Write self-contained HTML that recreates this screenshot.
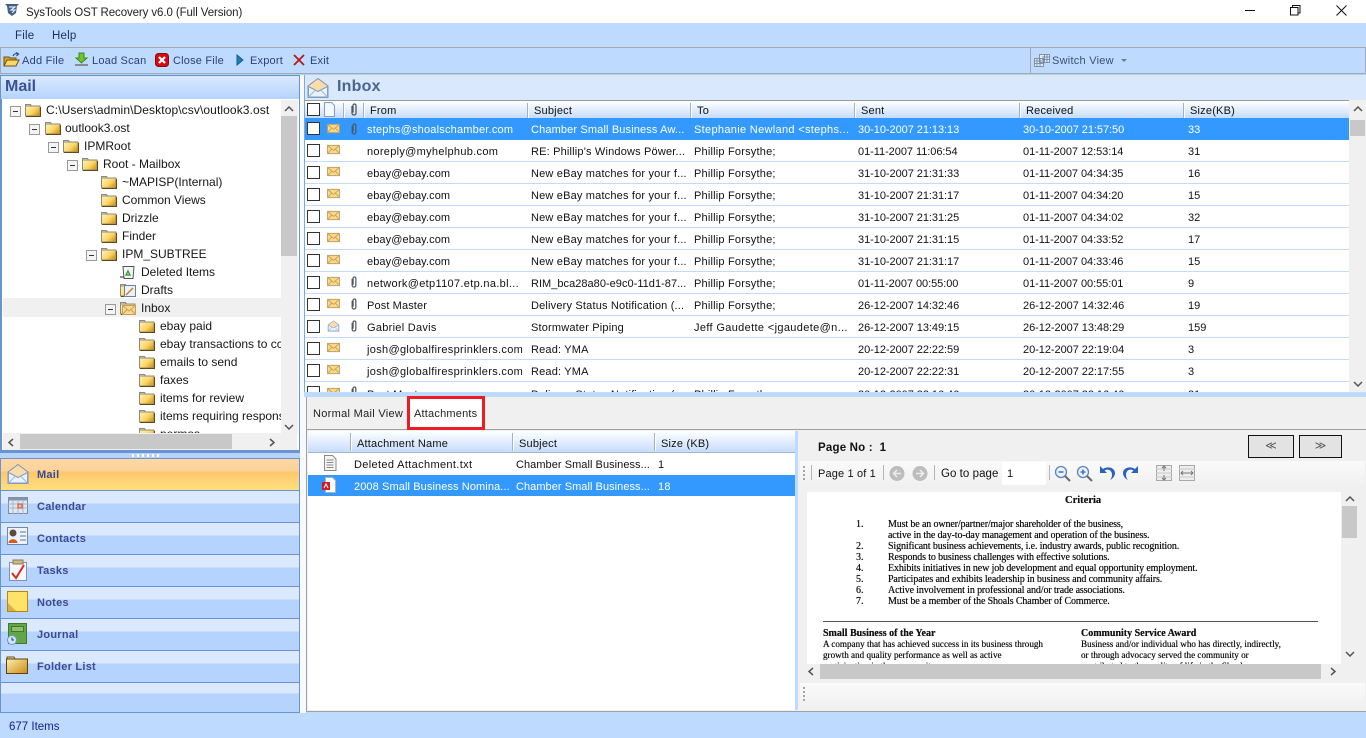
<!DOCTYPE html>
<html><head><meta charset="utf-8"><title>SysTools OST Recovery</title>
<style>
html,body{margin:0;padding:0;width:1366px;height:738px;overflow:hidden;background:#bfdaff}
body{position:relative;font:11px/16px "Liberation Sans",sans-serif;color:#111}
div,span,svg{position:absolute}
.t{white-space:nowrap;letter-spacing:.2px;margin-top:1px}
.att{letter-spacing:.05px}
.w{color:#fff}
.r{left:305px;width:1044px;height:21px;background:#fff;border-bottom:1px solid #c2dbfb}
.r span{white-space:nowrap;top:4px}
.r .a{left:62px;letter-spacing:.2px}.r .b{left:226px;letter-spacing:.18px}.r .c{left:389px;letter-spacing:.2px}.r .d{left:553px;letter-spacing:-.05px}.r .e{left:718px;letter-spacing:-.05px}.r .f{left:883px}
.cb{left:2px;top:4px;width:11px;height:11px;border:1px solid #333;background:#fff}
.sel{background:#3399ff;color:#fff;border-bottom-color:#3399ff}
.h{background:linear-gradient(#fff,#c6dcfb)}
.sep{top:2px;width:1px;height:15px;background:#9fb2c9;border-right:1px solid #fff}
.nav{left:1px;width:298px;height:31px;background:linear-gradient(#dbe9ff 0,#dbe9ff 40%,#b5d3fd 40%,#b5d3fd 100%);border-bottom:1px solid #6a94d1}
.nav b{position:absolute;left:36px;top:8px;font-size:11px;color:#3a4a94;letter-spacing:.25px}
.nav svg{left:6px;top:4px}
.tree{white-space:nowrap;font-size:12px;height:18px;line-height:18px;color:#161616}
.x{width:9px;height:9px;border:1px solid #999;background:#f4f4f4}
.x:after{content:"";position:absolute;left:2px;top:4px;width:5px;height:1px;background:#333}
.doc{font:10px/11px "Liberation Serif",serif;color:#111;white-space:nowrap;text-shadow:0 0 .4px #000}
.doc .l{letter-spacing:-.13px}
.doc .s{font-size:9.1px}
.tb{color:#2a3f7a;white-space:nowrap;letter-spacing:.2px;margin-top:1px}
</style></head><body>
<svg width="0" height="0" style="left:0;top:0">
<defs>
<linearGradient id="fg" x1="0" y1="0" x2="1" y2=".7"><stop offset="0" stop-color="#fff3c0"/><stop offset=".6" stop-color="#fcd667"/><stop offset="1" stop-color="#d79a1e"/></linearGradient>
<symbol id="fold" viewBox="0 0 16 14"><path d="M.5 3V1.500h5l1 1.500z" fill="#e8e4d2" stroke="#8f8a76"/><path d="M.5 3h14.500v10H.5z" fill="url(#fg)" stroke="#8f8a76"/><path d="M1 13.500h14.500V4" fill="none" stroke="#5d4a1a"/></symbol>
<symbol id="env" viewBox="0 0 14 12"><path d="M.5 1.500h13v9H.5z" fill="#fcd88a" stroke="#b9a26a"/><path d="M.5 1.500L7 7l6.500-5.500M.5 10.500L5 5.500M13.500 10.500L9 5.500" fill="none" stroke="#c9a05a"/></symbol>
<symbol id="clip" viewBox="0 0 8 13"><path d="M2 3v7a2 2 0 0 0 4 0V2.500a1.500 1.500 0 0 0-3 0V9.500" fill="none" stroke="#4d565f" stroke-width="1.300"/></symbol>
<symbol id="big" viewBox="0 0 22 22"><path d="M1 9L11 1.500 21 9v11.500H1z" fill="#fcdca8" stroke="#7f93b5"/><path d="M1.500 9.500l9.500 5 9.500-5v10.500h-19z" fill="#eaf2fd" stroke="#7f9fca"/><path d="M1.500 20l7-7M20.500 20l-7-7" stroke="#9db9dd" fill="none"/></symbol>
</defs></svg>

<!-- title bar -->
<div style="left:0;top:0;width:1366px;height:23px;background:#fff"></div>
<svg style="left:4px;top:3px" width="16" height="14" viewBox="0 0 16 14"><path d="M1 1h14l-2 2-1 7-4 3-4-3-1-7z" fill="#3f5f86"/><path d="M5 4h6L7 7h4L8 10" fill="none" stroke="#dfe8f2" stroke-width="1.200"/></svg>
<div class="t" style="left:26px;top:4px;color:#222;font-size:11.5px;letter-spacing:-.1px">SysTools OST Recovery v6.0 (Full Version)</div>
<div style="left:1245px;top:10px;width:10px;height:1px;background:#111"></div>
<svg style="left:1290px;top:5px" width="11" height="11"><path d="M.5 2.500h7.500v7.500H.5zM2.500 2.500V.5h7.500v7.500H8" fill="none" stroke="#111"/></svg>
<svg style="left:1336px;top:5px" width="11" height="11"><path d="M.5.5l10 10M10.500.5l-10 10" stroke="#111" fill="none"/></svg>

<!-- menu -->
<div class="t" style="left:15px;top:27px;color:#1e2f60;font-size:11.5px">File</div>
<div class="t" style="left:52px;top:27px;color:#1e2f60;font-size:11.5px">Help</div>

<!-- toolbar -->
<div style="left:0;top:47px;width:1366px;height:1px;background:#a5a9ad"></div>
<div style="left:0;top:73px;width:1366px;height:1px;background:#a5a9ad"></div>
<div style="left:0;top:74px;width:1366px;height:1px;background:#a9d3ee"></div>
<div style="left:1030px;top:47px;width:1px;height:27px;background:#a5a9ad"></div>
<div style="left:1365px;top:47px;width:1px;height:27px;background:#a5a9ad"></div>
<div style="left:0;top:47px;width:1px;height:27px;background:#a5a9ad"></div>
<svg style="left:3px;top:52px" width="17" height="15" viewBox="0 0 17 15"><path d="M1 5h5l1 1h6v2H5L2 14H1z" fill="#d9a52f" stroke="#6d5312"/><path d="M4 8h12l-3 6H1z" fill="#fcd768" stroke="#6d5312"/><path d="M10 4c1-2 3-3 5-2M13 .5L15.500 2 13.500 4" fill="none" stroke="#224a9c" stroke-width="1.200"/></svg>
<div class="tb" style="left:22px;top:52px;letter-spacing:.25px">Add File</div>
<svg style="left:74px;top:52px" width="15" height="15" viewBox="0 0 15 15"><path d="M5 1h5v5h3L7.500 11 2 6h3z" fill="#6bc52b" stroke="#3f8a12"/><path d="M1 13h13" stroke="#8a8a8a" stroke-width="2"/></svg>
<div class="tb" style="left:92px;top:52px">Load Scan</div>
<svg style="left:155px;top:53px" width="14" height="14" viewBox="0 0 14 14"><rect x=".5" y=".5" width="13" height="13" rx="3" fill="#d40d12" stroke="#8a0a0a"/><path d="M4 4l6 6M10 4l-6 6" stroke="#fff" stroke-width="2.200"/></svg>
<div class="tb" style="left:173px;top:52px">Close File</div>
<svg style="left:236px;top:54px" width="8" height="12" viewBox="0 0 8 12"><path d="M1 1l6 5-6 5z" fill="#1f7fb8" stroke="#12608f"/></svg>
<div class="tb" style="left:250px;top:52px">Export</div>
<svg style="left:293px;top:54px" width="12" height="12" viewBox="0 0 12 12"><path d="M1 1l10 10M11 1L1 11" stroke="#b21a16" stroke-width="1.800"/></svg>
<div class="tb" style="left:310px;top:52px">Exit</div>
<svg style="left:1034px;top:54px" width="16" height="13" viewBox="0 0 16 13"><path d="M5.500.5h10v8h-10zM.5 4.500h9v8h-9zM.5 7h9M.5 9.500h9M3 4.500v8M6 4.500v8M8 3h7.500M8 5.500h7.500M10.500.5v8M13 .5v8" fill="#e3edf8" stroke="#6a7c95" stroke-width=".8"/></svg>
<div class="tb" style="left:1052px;top:52px;color:#3a5070;letter-spacing:.25px">Switch View</div>
<div style="left:1121px;top:59px;width:0;height:0;border:3px solid transparent;border-top:3px solid #6a7c95"></div>

<!-- white gutter -->
<div style="left:300px;top:75px;width:4px;height:638px;background:#f6f9fe"></div>
<div style="left:304px;top:392px;width:2px;height:321px;background:#f6f9fe"></div>

<!-- left pane -->
<div style="left:0;top:75px;width:300px;height:25px;border:1px solid #6a94d1;box-sizing:border-box;background:linear-gradient(#dbe9ff,#b5d3fd)"></div>
<div style="left:5px;top:78px;font-size:16px;line-height:18px;font-weight:bold;color:#3a5396">Mail</div>
<div style="left:0;top:99px;width:300px;height:353px;box-sizing:border-box;border:2px solid #6a94d1;border-top:0;border-right:1px solid #6a94d1;background:#fff"></div>
<div style="left:3px;top:298px;width:278px;height:19px;background:#f0f0f0"></div>

<div class="x" style="left:10px;top:106px"></div>
<svg style="left:25px;top:103px" width="16" height="14"><use href="#fold"/></svg>
<div class="tree" style="left:46px;top:101px;letter-spacing:.1px">C:\Users\admin\Desktop\csv\outlook3.ost</div>
<div class="x" style="left:29px;top:124px"></div>
<svg style="left:45px;top:121px" width="16" height="14"><use href="#fold"/></svg>
<div class="tree" style="left:65px;top:119px">outlook3.ost</div>
<div class="x" style="left:48px;top:142px"></div>
<svg style="left:63px;top:139px" width="16" height="14"><use href="#fold"/></svg>
<div class="tree" style="left:84px;top:137px">IPMRoot</div>
<div class="x" style="left:67px;top:160px"></div>
<svg style="left:82px;top:157px" width="16" height="14"><use href="#fold"/></svg>
<div class="tree" style="left:103px;top:155px">Root - Mailbox</div>
<svg style="left:101px;top:175px" width="16" height="14"><use href="#fold"/></svg>
<div class="tree" style="left:122px;top:173px">~MAPISP(Internal)</div>
<svg style="left:101px;top:193px" width="16" height="14"><use href="#fold"/></svg>
<div class="tree" style="left:122px;top:191px">Common Views</div>
<svg style="left:101px;top:211px" width="16" height="14"><use href="#fold"/></svg>
<div class="tree" style="left:122px;top:209px">Drizzle</div>
<svg style="left:101px;top:229px" width="16" height="14"><use href="#fold"/></svg>
<div class="tree" style="left:122px;top:227px">Finder</div>
<div class="x" style="left:86px;top:250px"></div>
<svg style="left:101px;top:247px" width="16" height="14"><use href="#fold"/></svg>
<div class="tree" style="left:122px;top:245px">IPM_SUBTREE</div>
<svg style="left:120px;top:265px" width="16" height="14" viewBox="0 0 16 14"><path d="M3 1.500h11l-1 12H4z" fill="#f3f3f3" stroke="#555"/><path d="M6 10l2-4 2 4z" fill="none" stroke="#2a8a2a" stroke-width="1.200"/><path d="M0 12h4" stroke="#222"/></svg>
<div class="tree" style="left:141px;top:263px">Deleted Items</div>
<svg style="left:120px;top:283px" width="16" height="14"><use href="#fold"/></svg>
<svg style="left:124px;top:285px" width="12" height="12" viewBox="0 0 12 12"><rect x=".5" y=".5" width="11" height="11" fill="#eaf2fd" stroke="#6a80a5"/><path d="M2 10l7-7" stroke="#d07a20" stroke-width="1.500"/></svg>
<div class="tree" style="left:141px;top:281px">Drafts</div>
<div class="x" style="left:105px;top:304px"></div>
<svg style="left:120px;top:301px" width="16" height="14"><use href="#fold"/></svg>
<svg style="left:122px;top:304px" width="14" height="12"><use href="#env"/></svg>
<div class="tree" style="left:141px;top:299px">Inbox</div>
<svg style="left:139px;top:319px" width="16" height="14"><use href="#fold"/></svg>
<div class="tree" style="left:160px;top:317px">ebay paid</div>
<svg style="left:139px;top:337px" width="16" height="14"><use href="#fold"/></svg>
<div class="tree" style="left:160px;top:335px;width:121px;overflow:hidden">ebay transactions to cc</div>
<svg style="left:139px;top:355px" width="16" height="14"><use href="#fold"/></svg>
<div class="tree" style="left:160px;top:353px">emails to send</div>
<svg style="left:139px;top:373px" width="16" height="14"><use href="#fold"/></svg>
<div class="tree" style="left:160px;top:371px">faxes</div>
<svg style="left:139px;top:391px" width="16" height="14"><use href="#fold"/></svg>
<div class="tree" style="left:160px;top:389px">items for review</div>
<svg style="left:139px;top:409px" width="16" height="14"><use href="#fold"/></svg>
<div class="tree" style="left:160px;top:407px;width:121px;overflow:hidden">items requiring responses</div>
<div style="left:139px;top:427px;width:142px;height:7px;overflow:hidden"><svg style="left:0;top:0" width="16" height="14"><use href="#fold"/></svg><div class="tree" style="left:21px;top:-2px">permos</div></div>

<div style="left:281px;top:100px;width:17px;height:333px;background:#f0f0f0"></div>
<div style="left:281px;top:116px;width:16px;height:140px;background:#c8c8c8"></div>
<svg style="left:284px;top:106px" width="10" height="6"><path d="M1 5l4-4 4 4" fill="none" stroke="#555" stroke-width="1.500"/></svg>
<svg style="left:284px;top:424px" width="10" height="6"><path d="M1 1l4 4 4-4" fill="none" stroke="#555" stroke-width="1.500"/></svg>
<div style="left:3px;top:433px;width:294px;height:17px;background:#f0f0f0"></div>
<div style="left:20px;top:434px;width:212px;height:15px;background:#c8c8c8"></div>
<svg style="left:8px;top:438px" width="6" height="9"><path d="M5 1L1 4.500 5 8" fill="none" stroke="#555" stroke-width="1.500"/></svg>
<svg style="left:269px;top:438px" width="6" height="9"><path d="M1 1l4 3.500L1 8" fill="none" stroke="#555" stroke-width="1.500"/></svg>

<!-- splitter -->
<div style="left:0;top:452px;width:300px;height:7px;background:#b5d3fd;border-top:1px solid #6a94d1;border-bottom:1px solid #6a94d1;box-sizing:border-box"></div>
<div style="left:132px;top:454px;width:28px;height:3px;background:repeating-linear-gradient(90deg,#fff 0,#fff 2px,transparent 2px,transparent 5px)"></div>

<!-- nav -->
<div style="left:0;top:459px;width:1px;height:254px;background:#6a94d1"></div>
<div style="left:299px;top:459px;width:1px;height:254px;background:#6a94d1"></div>
<div class="nav" style="top:459px;background:linear-gradient(#fdd8a4 0,#fcd29b 40%,#fdc66b 40%,#ffdf7f 100%)"><svg width="22" height="22"><use href="#big"/></svg><b>Mail</b></div>
<div class="nav" style="top:491px"><svg width="20" height="18" style="top:6px;left:7px" viewBox="0 0 20 18"><rect x=".5" y=".5" width="19" height="16" fill="#dfe7f3" stroke="#7d8ba0"/><rect x=".5" y=".5" width="19" height="3" fill="#8494ae"/><path d="M0 7h20M0 11h20M5 3v14M10 3v14M15 3v14" stroke="#a9b6c9"/><rect x="10" y="7" width="4" height="4" fill="#f3c4b0" stroke="#d0482a"/></svg><b>Calendar</b></div>
<div class="nav" style="top:523px"><svg width="21" height="18" viewBox="0 0 21 18"><rect x=".5" y=".5" width="20" height="17" fill="#eef3fb" stroke="#6f88b0"/><circle cx="6" cy="6" r="3.500" fill="#5a4a42"/><path d="M1.500 16c0-5 9-5 9 0z" fill="#d9591e"/><path d="M13 5h6M13 9h6M13 13h6" stroke="#8fa0b8" stroke-width="1.500"/></svg><b>Contacts</b></div>
<div class="nav" style="top:555px"><svg width="20" height="22" viewBox="0 0 20 22"><rect x="2.500" y="3.500" width="17" height="18" fill="#f5f8fd" stroke="#7f93b5"/><rect x="6" y="1" width="10" height="4" fill="#c9b88a" stroke="#8a7a50"/><path d="M5 14l4 5L17 6" fill="none" stroke="#dd2a22" stroke-width="2"/></svg><b>Tasks</b></div>
<div class="nav" style="top:587px"><svg width="21" height="21" viewBox="0 0 21 21"><rect x=".5" y=".5" width="20" height="20" fill="#fde36a" stroke="#b8860b"/><path d="M1 12l8 8H1z" fill="#d6b04a"/></svg><b>Notes</b></div>
<div class="nav" style="top:619px"><svg width="20" height="22" viewBox="0 0 20 22"><rect x="1.500" y=".5" width="18" height="20" fill="#62a648" stroke="#3f7a2a"/><rect x="4.500" y="3.500" width="12" height="5" fill="#8cc06e" stroke="#3f7a2a"/><circle cx="5" cy="17" r="4.500" fill="#cfe6f8" stroke="#6a9cc8"/><path d="M5 14.500V17h2" stroke="#335" fill="none"/></svg><b>Journal</b></div>
<div class="nav" style="top:651px"><svg width="22" height="18" style="left:5px;top:5px" viewBox="0 0 22 18"><path d="M1 3V1h7l1 2z" fill="#e6d9a8" stroke="#6d5312"/><rect x=".5" y="3" width="21" height="14.500" fill="url(#gf)" stroke="#5a4310"/><defs><linearGradient id="gf" x1="0" y1="0" x2="1" y2="1"><stop offset="0" stop-color="#fff0b0"/><stop offset="1" stop-color="#c98a10"/></linearGradient></defs></svg><b>Folder List</b></div>
<div class="nav" style="top:683px;height:29px;background:linear-gradient(#dbe9ff 0,#dbe9ff 37%,#b5d3fd 37%,#b5d3fd 100%)"></div>

<!-- status -->
<div class="t" style="left:9px;top:718px;color:#141e8c;font-size:11.5px;letter-spacing:0">677 Items</div>

<!-- right pane -->
<div style="left:305px;top:75px;width:1061px;height:25px;background:#d9e8fd"></div>
<div style="left:304px;top:75px;width:1px;height:317px;background:#7fa9de"></div>
<svg style="left:307px;top:77px" width="22" height="22"><use href="#big"/></svg>
<div style="left:337px;top:78px;font-size:16px;line-height:18px;font-weight:bold;color:#4a658f;letter-spacing:.2px">Inbox</div>

<div style="left:305px;top:100px;width:1061px;height:293px;background:#fff"></div>
<div class="h" style="left:305px;top:100px;width:1044px;height:17px;border-top:1px solid #9a9a9a;border-bottom:1px solid #a5b4c8;overflow:visible">
<div style="left:2px;top:2px;width:11px;height:11px;border:1px solid #333;background:#fff"></div>
<svg style="left:18px;top:1px" width="13" height="15" viewBox="0 0 13 15"><path d="M1.500.5h7l3 3v11h-10z" fill="#f3f8ff" stroke="#7f9bc8"/></svg>
<div class="sep" style="left:38px"></div>
<svg style="left:44px;top:2px" width="10" height="13"><use href="#clip"/></svg>
<div class="sep" style="left:58px"></div>
<div class="t" style="left:65px;top:1px">From</div>
<div class="sep" style="left:222px"></div>
<div class="t" style="left:229px;top:1px">Subject</div>
<div class="sep" style="left:385px"></div>
<div class="t" style="left:392px;top:1px">To</div>
<div class="sep" style="left:549px"></div>
<div class="t" style="left:556px;top:1px">Sent</div>
<div class="sep" style="left:714px"></div>
<div class="t" style="left:721px;top:1px">Received</div>
<div class="sep" style="left:878px"></div>
<div class="t" style="left:885px;top:1px">Size(KB)</div>
</div>

<div class="r sel" style="top:118px"><div class="cb"></div><svg style="left:22px;top:5px" width="13" height="11"><use href="#env"/></svg><svg style="left:45px;top:5px" width="8" height="12"><use href="#clip"/></svg><span class="a" style="letter-spacing:.2px">stephs@shoalschamber.com</span><span class="b" style="letter-spacing:.14px">Chamber Small Business Aw...</span><span class="c" style="letter-spacing:.32px">Stephanie Newland &lt;stephs...</span><span class="d">30-10-2007 21:13:13</span><span class="e">30-10-2007 21:57:50</span><span class="f">33</span></div>
<div class="r" style="top:140px"><div class="cb"></div><svg style="left:22px;top:4px" width="13" height="11"><use href="#env"/></svg><span class="a" style="letter-spacing:.3px">noreply@myhelphub.com</span><span class="b">RE: Phillip's Windows Pöwer...</span><span class="c">Phillip Forsythe;</span><span class="d">01-11-2007 11:06:54</span><span class="e">01-11-2007 12:53:14</span><span class="f">31</span></div>
<div class="r" style="top:162px"><div class="cb"></div><svg style="left:22px;top:4px" width="13" height="11"><use href="#env"/></svg><span class="a" style="letter-spacing:.1px">ebay@ebay.com</span><span class="b">New eBay matches for your f...</span><span class="c">Phillip Forsythe;</span><span class="d">31-10-2007 21:31:33</span><span class="e">01-11-2007 04:34:35</span><span class="f">16</span></div>
<div class="r" style="top:184px"><div class="cb"></div><svg style="left:22px;top:4px" width="13" height="11"><use href="#env"/></svg><span class="a" style="letter-spacing:.1px">ebay@ebay.com</span><span class="b">New eBay matches for your f...</span><span class="c">Phillip Forsythe;</span><span class="d">31-10-2007 21:31:17</span><span class="e">01-11-2007 04:34:20</span><span class="f">15</span></div>
<div class="r" style="top:206px"><div class="cb"></div><svg style="left:22px;top:4px" width="13" height="11"><use href="#env"/></svg><span class="a" style="letter-spacing:.1px">ebay@ebay.com</span><span class="b">New eBay matches for your f...</span><span class="c">Phillip Forsythe;</span><span class="d">31-10-2007 21:31:25</span><span class="e">01-11-2007 04:34:02</span><span class="f">32</span></div>
<div class="r" style="top:228px"><div class="cb"></div><svg style="left:22px;top:4px" width="13" height="11"><use href="#env"/></svg><span class="a" style="letter-spacing:.1px">ebay@ebay.com</span><span class="b">New eBay matches for your f...</span><span class="c">Phillip Forsythe;</span><span class="d">31-10-2007 21:31:15</span><span class="e">01-11-2007 04:33:52</span><span class="f">17</span></div>
<div class="r" style="top:250px"><div class="cb"></div><svg style="left:22px;top:4px" width="13" height="11"><use href="#env"/></svg><span class="a" style="letter-spacing:.1px">ebay@ebay.com</span><span class="b">New eBay matches for your f...</span><span class="c">Phillip Forsythe;</span><span class="d">31-10-2007 21:31:17</span><span class="e">01-11-2007 04:33:46</span><span class="f">15</span></div>
<div class="r" style="top:272px"><div class="cb"></div><svg style="left:22px;top:4px" width="13" height="11"><use href="#env"/></svg><svg style="left:45px;top:4px" width="8" height="12"><use href="#clip"/></svg><span class="a" style="letter-spacing:.32px">network@etp1107.etp.na.bl...</span><span class="b" style="letter-spacing:.03px">RIM_bca28a80-e9c0-11d1-87...</span><span class="c">Phillip Forsythe;</span><span class="d">01-11-2007 00:55:00</span><span class="e">01-11-2007 00:55:01</span><span class="f">9</span></div>
<div class="r" style="top:294px"><div class="cb"></div><svg style="left:22px;top:4px" width="13" height="11"><use href="#env"/></svg><svg style="left:45px;top:4px" width="8" height="12"><use href="#clip"/></svg><span class="a" style="letter-spacing:.12px">Post Master</span><span class="b">Delivery Status Notification (...</span><span class="c">Phillip Forsythe;</span><span class="d">26-12-2007 14:32:46</span><span class="e">26-12-2007 14:32:46</span><span class="f">19</span></div>
<div class="r" style="top:316px"><div class="cb"></div><svg style="left:22px;top:4px" width="13" height="12" viewBox="0 0 22 22"><use href="#big"/></svg><svg style="left:45px;top:4px" width="8" height="12"><use href="#clip"/></svg><span class="a" style="letter-spacing:.28px">Gabriel Davis</span><span class="b">Stormwater Piping</span><span class="c" style="letter-spacing:.35px">Jeff Gaudette &lt;jgaudete@n...</span><span class="d">26-12-2007 13:49:15</span><span class="e">26-12-2007 13:48:29</span><span class="f">159</span></div>
<div class="r" style="top:338px"><div class="cb"></div><svg style="left:22px;top:4px" width="13" height="11"><use href="#env"/></svg><span class="a" style="letter-spacing:.32px">josh@globalfiresprinklers.com</span><span class="b">Read: YMA</span><span class="d">20-12-2007 22:22:59</span><span class="e">20-12-2007 22:19:04</span><span class="f">3</span></div>
<div class="r" style="top:360px"><div class="cb"></div><svg style="left:22px;top:4px" width="13" height="11"><use href="#env"/></svg><span class="a" style="letter-spacing:.32px">josh@globalfiresprinklers.com</span><span class="b">Read: YMA</span><span class="d">20-12-2007 22:22:31</span><span class="e">20-12-2007 22:17:55</span><span class="f">3</span></div>
<div class="r" style="top:382px;height:10px;overflow:hidden;border:0"><div class="cb"></div><svg style="left:22px;top:5px" width="13" height="11"><use href="#env"/></svg><svg style="left:45px;top:4px" width="8" height="12"><use href="#clip"/></svg><span class="a" style="top:5px">Post Master</span><span class="b" style="top:5px">Delivery Status Notification (...</span><span class="c" style="top:5px">Phillip Forsythe;</span><span class="d" style="top:5px">20-12-2007 22:16:46</span><span class="e" style="top:5px">20-12-2007 22:16:46</span><span class="f" style="top:5px">21</span></div>

<div style="left:1349px;top:100px;width:17px;height:292px;background:#f0f0f0"></div>
<div style="left:1350px;top:120px;width:15px;height:16px;background:#c8c8c8"></div>
<svg style="left:1353px;top:106px" width="10" height="6"><path d="M1 5l4-4 4 4" fill="none" stroke="#555" stroke-width="1.500"/></svg>
<svg style="left:1353px;top:381px" width="10" height="6"><path d="M1 1l4 4 4-4" fill="none" stroke="#555" stroke-width="1.500"/></svg>

<!-- bottom split -->
<div style="left:304px;top:392px;width:1062px;height:5px;background:#bfdaff"></div>
<div style="left:306px;top:397px;width:1060px;height:315px;background:#f0f0f0;border-left:1px solid #a0a0a0;border-bottom:1px solid #a0a0a0;box-sizing:border-box"></div>
<div style="left:306px;top:429px;width:1060px;height:1px;background:#a0a0a0"></div>
<div class="t" style="left:313px;top:405px;color:#222;letter-spacing:.3px">Normal Mail View</div>
<div style="left:407px;top:396px;width:78px;height:34px;box-sizing:border-box;border:3px solid #ed1c24;background:#fff"></div>
<div class="t" style="left:414px;top:405px;color:#222">Attachments</div>

<!-- attachments -->
<div style="left:308px;top:431px;width:487px;height:279px;background:#fff"></div>
<div class="h" style="left:308px;top:431px;width:487px;height:21px;border-bottom:1px solid #a5b4c8">
<div class="sep" style="left:42px;height:18px"></div><div class="t" style="left:49px;top:4px">Attachment Name</div>
<div class="sep" style="left:204px;height:18px"></div><div class="t" style="left:211px;top:4px">Subject</div>
<div class="sep" style="left:346px;height:18px"></div><div class="t" style="left:353px;top:4px">Size (KB)</div>
</div>
<div style="left:795px;top:431px;width:3px;height:279px;background:#bfdaff"></div>
<svg style="left:323px;top:455px" width="14" height="16" viewBox="0 0 14 16"><path d="M1.500.5h8l3.500 3.500v11.500H1.500z" fill="#f4f4f4" stroke="#8a8a8a"/><path d="M3.500 5h7M3.500 7.500h7M3.500 10h7M3.500 12.500h7" stroke="#8a8a8a"/></svg>
<div class="t" style="left:354px;top:456px;letter-spacing:.35px">Deleted Attachment.txt</div>
<div class="t att" style="left:516px;top:456px">Chamber Small Business...</div>
<div class="t" style="left:658px;top:456px">1</div>
<div style="left:308px;top:475px;width:487px;height:21px;background:#3399ff"></div>
<svg style="left:321px;top:477px" width="16" height="16" viewBox="0 0 16 16"><path d="M4.500.5h7l3 3v12h-10z" fill="#fff" stroke="#b0b0b0"/><rect x="1" y="5" width="8" height="8" fill="#d11d23"/><path d="M3 11l2-4 2 4" stroke="#fff" fill="none"/></svg>
<div class="t w" style="left:354px;top:478px;letter-spacing:.1px">2008 Small Business Nomina...</div>
<div class="t w att" style="left:516px;top:478px">Chamber Small Business...</div>
<div class="t w" style="left:658px;top:478px">18</div>

<!-- preview -->
<div class="t" style="left:818px;top:439px;font-weight:bold;color:#111;font-size:11.5px;letter-spacing:.2px">Page No :&nbsp; 1</div>
<div style="left:1248px;top:435px;width:46px;height:23px;box-sizing:border-box;border:1px solid #111;background:#e3e3e3;text-align:center;line-height:21px;color:#555">≪</div>
<div style="left:1299px;top:435px;width:43px;height:23px;box-sizing:border-box;border:1px solid #111;background:#e3e3e3;text-align:center;line-height:21px;color:#555">≫</div>

<div style="left:800px;top:461px;width:565px;height:24px;background:linear-gradient(#fafafa,#f1f1f1)"></div>
<div style="left:803px;top:466px;width:2px;height:14px;background:repeating-linear-gradient(#a5a5a5 0,#a5a5a5 2px,transparent 2px,transparent 4px)"></div>
<div style="left:811px;top:465px;width:1px;height:15px;background:#b5b5b5"></div>
<div class="t" style="left:818px;top:465px;letter-spacing:.15px">Page 1 of 1</div>
<div style="left:883px;top:465px;width:1px;height:15px;background:#b5b5b5"></div>
<svg style="left:889px;top:466px" width="16" height="15" viewBox="0 0 16 15"><circle cx="8" cy="7.500" r="7.500" fill="#bdbdbd"/><path d="M12 7.500H5M8 4L4.500 7.500 8 11" stroke="#eee" stroke-width="1.500" fill="none"/></svg>
<svg style="left:912px;top:466px" width="16" height="15" viewBox="0 0 16 15"><circle cx="8" cy="7.500" r="7.500" fill="#bdbdbd"/><path d="M4 7.500h7M8 4l3.500 3.500L8 11" stroke="#eee" stroke-width="1.500" fill="none"/></svg>
<div style="left:934px;top:465px;width:1px;height:15px;background:#b5b5b5"></div>
<div class="t" style="left:941px;top:465px;font-size:11.5px;letter-spacing:.05px">Go to page</div>
<div style="left:1002px;top:462px;width:44px;height:23px;background:#fff"></div>
<div class="t" style="left:1007px;top:465px">1</div>
<div style="left:1049px;top:465px;width:1px;height:15px;background:#b5b5b5"></div>
<svg style="left:1054px;top:465px" width="17" height="17" viewBox="0 0 17 17"><circle cx="7" cy="7" r="5.500" fill="#e8f1fc" stroke="#5f86b5" stroke-width="1.300"/><path d="M11 11l5 5" stroke="#667" stroke-width="2"/><path d="M4.500 7h5" stroke="#2a62c0" stroke-width="1.300"/></svg>
<svg style="left:1076px;top:465px" width="17" height="17" viewBox="0 0 17 17"><circle cx="7" cy="7" r="5.500" fill="#e8f1fc" stroke="#5f86b5" stroke-width="1.300"/><path d="M11 11l5 5" stroke="#667" stroke-width="2"/><path d="M4.500 7h5M7 4.500v5" stroke="#2a62c0" stroke-width="1.300"/></svg>
<svg style="left:1099px;top:465px" width="16" height="16" viewBox="0 0 16 16"><path d="M1 1v7h7L5.500 5.500C9 3.500 13 5 13 10c0 2-1 4-2 5 4-2 5-5 5-7C16 3 9 .5 4 4z" fill="#2a62c0"/></svg>
<svg style="left:1123px;top:465px" width="16" height="16" viewBox="0 0 16 16"><path d="M15 1v7H8l2.500-2.500C7 3.500 3 5 3 10c0 2 1 4 2 5-4-2-5-5-5-7C0 3 7 .5 12 4z" fill="#2a62c0"/></svg>
<svg style="left:1156px;top:465px" width="16" height="16" viewBox="0 0 16 16"><rect x=".5" y=".5" width="15" height="15" fill="#eee" stroke="#a8a8a8"/><path d="M0 4h16M0 8h16M0 12h16" stroke="#c8c8c8"/><path d="M8 1v5M6 3l2-2 2 2M8 15v-5M6 13l2 2 2-2" stroke="#777" fill="none"/></svg>
<svg style="left:1179px;top:465px" width="16" height="16" viewBox="0 0 16 16"><rect x=".5" y=".5" width="15" height="15" fill="#eee" stroke="#a8a8a8"/><path d="M0 4h16M0 12h16" stroke="#c8c8c8"/><path d="M2 8h12M4 6L2 8l2 2M12 6l2 2-2 2" stroke="#777" fill="none"/></svg>

<div style="left:807px;top:492px;width:534px;height:172px;background:#fff;overflow:hidden" class="doc">
<div style="left:258px;top:3px;font-weight:bold;font-size:10.500px">Criteria</div>
<div style="left:49px;top:27px;line-height:11px">1.<br><br>2.<br>3.<br>4.<br>5.<br>6.<br>7.</div>
<div class="l" style="left:81px;top:27px;line-height:11px">Must be an owner/partner/major shareholder of the business,<br>active in the day-to-day management and operation of the business.<br>Significant business achievements, i.e. industry awards, public recognition.<br>Responds to business challenges with effective solutions.<br>Exhibits initiatives in new job development and equal opportunity employment.<br>Participates and exhibits leadership in business and community affairs.<br>Active involvement in professional and/or trade associations.<br>Must be a member of the Shoals Chamber of Commerce.</div>
<div style="left:16px;top:129px;width:495px;height:1px;background:#555"></div>
<div style="left:16px;top:136px"><b>Small Business of the Year</b><br><span class="s" style="position:static">A company that has achieved success in its business through<br>growth and quality performance as well as active<br>participation in the community.</span></div>
<div style="left:274px;top:136px"><b>Community Service Award</b><br><span class="s" style="position:static">Business and/or individual who has directly, indirectly,<br>or through advocacy served the community or<br>contributed to the quality of life in the Shoals.</span></div>
</div>
<div style="left:1341px;top:492px;width:17px;height:172px;background:#f0f0f0"></div>
<div style="left:1342px;top:506px;width:15px;height:32px;background:#c8c8c8"></div>
<svg style="left:1345px;top:496px" width="10" height="6"><path d="M1 5l4-4 4 4" fill="none" stroke="#555" stroke-width="1.500"/></svg>
<svg style="left:1345px;top:651px" width="10" height="6"><path d="M1 1l4 4 4-4" fill="none" stroke="#555" stroke-width="1.500"/></svg>
<div style="left:820px;top:664px;width:501px;height:15px;background:#c8c8c8"></div>
<svg style="left:808px;top:667px" width="6" height="9"><path d="M5 1L1 4.500 5 8" fill="none" stroke="#555" stroke-width="1.500"/></svg>
<svg style="left:1330px;top:667px" width="6" height="9"><path d="M1 1l4 3.500L1 8" fill="none" stroke="#555" stroke-width="1.500"/></svg>
<div style="left:800px;top:683px;width:565px;height:26px;background:linear-gradient(#fafafa,#f0f0f0)"></div>
<div style="left:803px;top:687px;width:2px;height:14px;background:repeating-linear-gradient(#a5a5a5 0,#a5a5a5 2px,transparent 2px,transparent 4px)"></div>
</body></html>
